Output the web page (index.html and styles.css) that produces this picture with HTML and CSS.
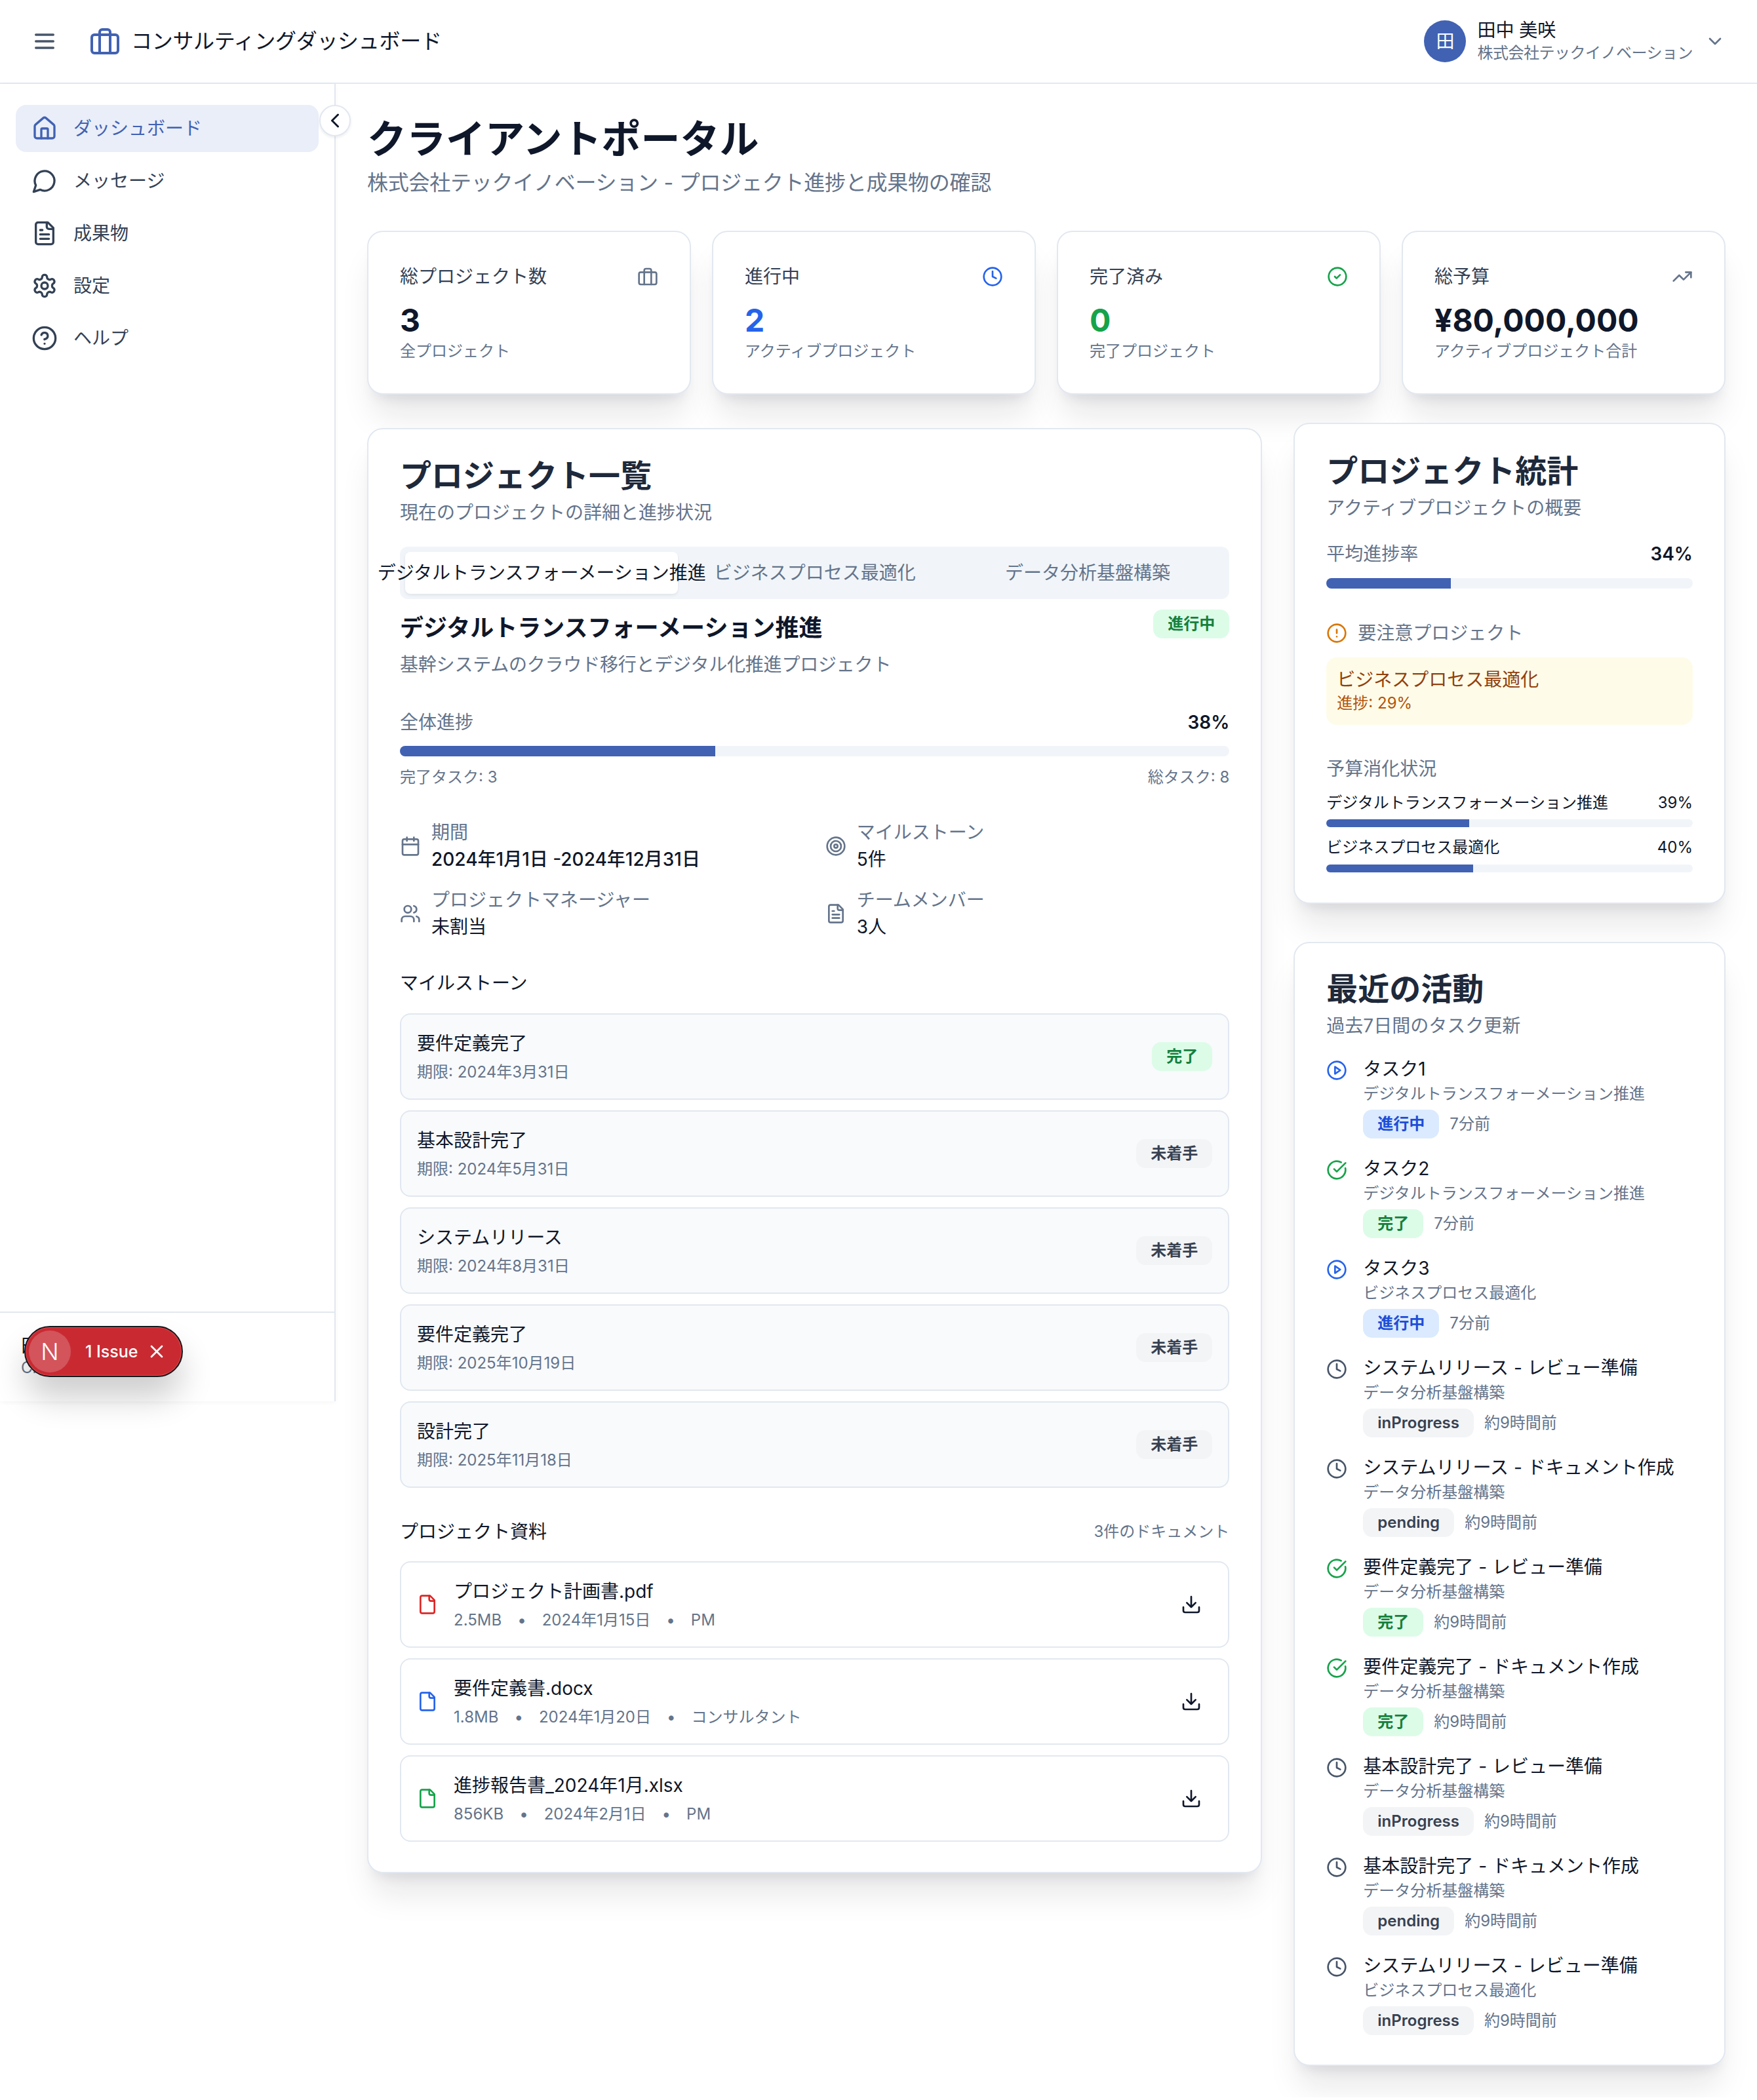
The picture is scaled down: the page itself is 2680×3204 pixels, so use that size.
FILE: index.html
```html
<!DOCTYPE html>
<html lang="ja">
<head>
    <meta charset="UTF-8">
    <title>コンサルティングダッシュボード</title>
    <link rel="stylesheet" href="styles.css">
</head>
<body>
    <!-- icon sprite -->
    <svg class="sprite" xmlns="http://www.w3.org/2000/svg">
        <symbol id="i-menu" viewBox="0 0 24 24"><path d="M4 12h16M4 6h16M4 18h16"/></symbol>
        <symbol id="i-briefcase" viewBox="0 0 24 24"><rect x="2" y="7" width="20" height="14" rx="2"/><path d="M16 21V5a2 2 0 0 0-2-2h-4a2 2 0 0 0-2 2v16"/></symbol>
        <symbol id="i-home" viewBox="0 0 24 24"><path d="M15 21v-8a1 1 0 0 0-1-1h-4a1 1 0 0 0-1 1v8"/><path d="M3 10a2 2 0 0 1 .709-1.528l7-5.999a2 2 0 0 1 2.582 0l7 5.999A2 2 0 0 1 21 10v9a2 2 0 0 1-2 2H5a2 2 0 0 1-2-2z"/></symbol>
        <symbol id="i-message" viewBox="0 0 24 24"><path d="M7.9 20A9 9 0 1 0 4 16.1L2 22Z"/></symbol>
        <symbol id="i-file-text" viewBox="0 0 24 24"><path d="M15 2H6a2 2 0 0 0-2 2v16a2 2 0 0 0 2 2h12a2 2 0 0 0 2-2V7Z"/><path d="M14 2v4a2 2 0 0 0 2 2h4"/><path d="M10 9H8M16 13H8M16 17H8"/></symbol>
        <symbol id="i-file" viewBox="0 0 24 24"><path d="M15 2H6a2 2 0 0 0-2 2v16a2 2 0 0 0 2 2h12a2 2 0 0 0 2-2V7Z"/><path d="M14 2v4a2 2 0 0 0 2 2h4"/></symbol>
        <symbol id="i-settings" viewBox="0 0 24 24"><path d="M12.22 2h-.44a2 2 0 0 0-2 2v.18a2 2 0 0 1-1 1.73l-.43.25a2 2 0 0 1-2 0l-.15-.08a2 2 0 0 0-2.73.73l-.22.38a2 2 0 0 0 .73 2.73l.15.1a2 2 0 0 1 1 1.72v.51a2 2 0 0 1-1 1.74l-.15.09a2 2 0 0 0-.73 2.73l.22.38a2 2 0 0 0 2.73.73l.15-.08a2 2 0 0 1 2 0l.43.25a2 2 0 0 1 1 1.73V20a2 2 0 0 0 2 2h.44a2 2 0 0 0 2-2v-.18a2 2 0 0 1 1-1.73l.43-.25a2 2 0 0 1 2 0l.15.08a2 2 0 0 0 2.73-.73l.22-.39a2 2 0 0 0-.73-2.73l-.15-.08a2 2 0 0 1-1-1.74v-.5a2 2 0 0 1 1-1.74l.15-.09a2 2 0 0 0 .73-2.73l-.22-.38a2 2 0 0 0-2.73-.73l-.15.08a2 2 0 0 1-2 0l-.43-.25a2 2 0 0 1-1-1.73V4a2 2 0 0 0-2-2z"/><circle cx="12" cy="12" r="3"/></symbol>
        <symbol id="i-help" viewBox="0 0 24 24"><circle cx="12" cy="12" r="10"/><path d="M9.09 9a3 3 0 0 1 5.83 1c0 2-3 3-3 3M12 17h.01"/></symbol>
        <symbol id="i-chevron-down" viewBox="0 0 24 24"><path d="m6 9 6 6 6-6"/></symbol>
        <symbol id="i-chevron-left" viewBox="0 0 24 24"><path d="m15 18-6-6 6-6"/></symbol>
        <symbol id="i-clock" viewBox="0 0 24 24"><circle cx="12" cy="12" r="10"/><path d="M12 6v6l4 2"/></symbol>
        <symbol id="i-check" viewBox="0 0 24 24"><circle cx="12" cy="12" r="10"/><path d="m9 12 2 2 4-4"/></symbol>
        <symbol id="i-check-big" viewBox="0 0 24 24"><path d="M21.801 10A10 10 0 1 1 17 3.335"/><path d="m9 11 3 3L22 4"/></symbol>
        <symbol id="i-play" viewBox="0 0 24 24"><circle cx="12" cy="12" r="10"/><path d="M10 8l6 4-6 4z"/></symbol>
        <symbol id="i-trend" viewBox="0 0 24 24"><path d="M22 7l-8.5 8.5-5-5L2 17"/><path d="M16 7h6v6"/></symbol>
        <symbol id="i-calendar" viewBox="0 0 24 24"><path d="M8 2v4M16 2v4"/><rect x="3" y="4" width="18" height="18" rx="2"/><path d="M3 10h18"/></symbol>
        <symbol id="i-target" viewBox="0 0 24 24"><circle cx="12" cy="12" r="10"/><circle cx="12" cy="12" r="6"/><circle cx="12" cy="12" r="2"/></symbol>
        <symbol id="i-users" viewBox="0 0 24 24"><path d="M16 21v-2a4 4 0 0 0-4-4H6a4 4 0 0 0-4 4v2"/><circle cx="9" cy="7" r="4"/><path d="M22 21v-2a4 4 0 0 0-3-3.87M16 3.13a4 4 0 0 1 0 7.75"/></symbol>
        <symbol id="i-download" viewBox="0 0 24 24"><path d="M21 15v4a2 2 0 0 1-2 2H5a2 2 0 0 1-2-2v-4"/><path d="m7 10 5 5 5-5M12 15V3"/></symbol>
        <symbol id="i-alert" viewBox="0 0 24 24"><circle cx="12" cy="12" r="10"/><path d="M12 8v4M12 16h.01"/></symbol>
        <symbol id="i-x" viewBox="0 0 24 24"><path d="M18 6 6 18M6 6l12 12"/></symbol>
    </svg>

    <header class="topbar">
        <div class="topbar-left">
            <svg class="icon icon-40 topbar-menu"><use href="#i-menu"/></svg>
            <svg class="icon topbar-logo"><use href="#i-briefcase"/></svg>
            <span class="topbar-title">コンサルティングダッシュボード</span>
        </div>
        <div class="user">
            <div class="user-avatar">田</div>
            <div class="user-text">
                <div class="user-name">田中 美咲</div>
                <div class="user-company">株式会社テックイノベーション</div>
            </div>
            <svg class="icon icon-32 user-chevron"><use href="#i-chevron-down"/></svg>
        </div>
    </header>

    <div class="layout">
        <aside class="sidebar">
            <button class="collapse-btn"><svg class="icon icon-36"><use href="#i-chevron-left"/></svg></button>
            <nav class="nav">
                <a class="nav-item active"><svg class="icon icon-40"><use href="#i-home"/></svg>ダッシュボード</a>
                <a class="nav-item"><svg class="icon icon-40"><use href="#i-message"/></svg>メッセージ</a>
                <a class="nav-item"><svg class="icon icon-40"><use href="#i-file-text"/></svg>成果物</a>
                <a class="nav-item"><svg class="icon icon-40"><use href="#i-settings"/></svg>設定</a>
                <a class="nav-item"><svg class="icon icon-40"><use href="#i-help"/></svg>ヘルプ</a>
            </nav>
            <div class="sidebar-foot">
                <div class="foot-name">田中 美咲</div>
                <div class="foot-role">Client</div>
            </div>
            <div class="issue-toast">
                <span class="issue-logo">N</span>
                <span class="issue-text">1 Issue</span>
                <svg class="icon issue-close"><use href="#i-x"/></svg>
            </div>
        </aside>

        <main class="main">
            <h1 class="page-title">クライアントポータル</h1>
            <p class="page-sub">株式会社テックイノベーション - プロジェクト進捗と成果物の確認</p>

            <section class="stats">
                <div class="card stat">
                    <div class="stat-head"><span>総プロジェクト数</span><svg class="icon icon-32 c-slate"><use href="#i-briefcase"/></svg></div>
                    <div class="stat-value">3</div>
                    <div class="stat-sub">全プロジェクト</div>
                </div>
                <div class="card stat">
                    <div class="stat-head"><span>進行中</span><svg class="icon icon-32 c-blue"><use href="#i-clock"/></svg></div>
                    <div class="stat-value c-blue">2</div>
                    <div class="stat-sub">アクティブプロジェクト</div>
                </div>
                <div class="card stat">
                    <div class="stat-head"><span>完了済み</span><svg class="icon icon-32 c-green"><use href="#i-check"/></svg></div>
                    <div class="stat-value c-green">0</div>
                    <div class="stat-sub">完了プロジェクト</div>
                </div>
                <div class="card stat">
                    <div class="stat-head"><span>総予算</span><svg class="icon icon-32 c-slate"><use href="#i-trend"/></svg></div>
                    <div class="stat-value">¥80,000,000</div>
                    <div class="stat-sub">アクティブプロジェクト合計</div>
                </div>
            </section>

            <div class="columns">
                <section class="card panel panel-projects">
                    <h2 class="panel-title">プロジェクト一覧</h2>
                    <p class="panel-sub">現在のプロジェクトの詳細と進捗状況</p>

                    <div class="tabs">
                        <div class="tab active">デジタルトランスフォーメーション推進</div>
                        <div class="tab">ビジネスプロセス最適化</div>
                        <div class="tab">データ分析基盤構築</div>
                    </div>

                    <div class="project-head">
                        <h3 class="project-name">デジタルトランスフォーメーション推進</h3>
                        <span class="badge badge-green">進行中</span>
                    </div>
                    <p class="project-desc">基幹システムのクラウド移行とデジタル化推進プロジェクト</p>

                    <div class="row-between progress-head">
                        <span class="muted">全体進捗</span>
                        <span class="strong">38%</span>
                    </div>
                    <div class="bar bar-16"><div class="bar-fill" style="width: 38%"></div></div>
                    <div class="row-between progress-foot">
                        <span>完了タスク: 3</span>
                        <span>総タスク: 8</span>
                    </div>

                    <div class="details">
                        <div class="detail">
                            <svg class="icon icon-32 c-slate"><use href="#i-calendar"/></svg>
                            <div><div class="muted">期間</div><div class="detail-value detail-dates">2024年1月1日 -2024年12月31日</div></div>
                        </div>
                        <div class="detail">
                            <svg class="icon icon-32 c-slate"><use href="#i-target"/></svg>
                            <div><div class="muted">マイルストーン</div><div class="detail-value">5件</div></div>
                        </div>
                        <div class="detail">
                            <svg class="icon icon-32 c-slate"><use href="#i-users"/></svg>
                            <div><div class="muted">プロジェクトマネージャー</div><div class="detail-value">未割当</div></div>
                        </div>
                        <div class="detail">
                            <svg class="icon icon-32 c-slate"><use href="#i-file-text"/></svg>
                            <div><div class="muted">チームメンバー</div><div class="detail-value">3人</div></div>
                        </div>
                    </div>

                    <h4 class="section-head milestones-head">マイルストーン</h4>
                    <div class="milestones">
                        <div class="milestone">
                            <div><div class="item-title">要件定義完了</div><div class="item-sub">期限: 2024年3月31日</div></div>
                            <span class="badge badge-green">完了</span>
                        </div>
                        <div class="milestone">
                            <div><div class="item-title">基本設計完了</div><div class="item-sub">期限: 2024年5月31日</div></div>
                            <span class="badge badge-gray">未着手</span>
                        </div>
                        <div class="milestone">
                            <div><div class="item-title">システムリリース</div><div class="item-sub">期限: 2024年8月31日</div></div>
                            <span class="badge badge-gray">未着手</span>
                        </div>
                        <div class="milestone">
                            <div><div class="item-title">要件定義完了</div><div class="item-sub">期限: 2025年10月19日</div></div>
                            <span class="badge badge-gray">未着手</span>
                        </div>
                        <div class="milestone">
                            <div><div class="item-title">設計完了</div><div class="item-sub">期限: 2025年11月18日</div></div>
                            <span class="badge badge-gray">未着手</span>
                        </div>
                    </div>

                    <div class="row-between docs-head">
                        <h4 class="section-head">プロジェクト資料</h4>
                        <span class="docs-count">3件のドキュメント</span>
                    </div>
                    <div class="docs">
                        <div class="doc">
                            <svg class="icon icon-32 c-red"><use href="#i-file"/></svg>
                            <div class="doc-body">
                                <div class="item-title">プロジェクト計画書.pdf</div>
                                <div class="item-sub doc-meta"><span>2.5MB</span><span>•</span><span>2024年1月15日</span><span>•</span><span>PM</span></div>
                            </div>
                            <svg class="icon icon-32 doc-download"><use href="#i-download"/></svg>
                        </div>
                        <div class="doc">
                            <svg class="icon icon-32 c-blue"><use href="#i-file"/></svg>
                            <div class="doc-body">
                                <div class="item-title">要件定義書.docx</div>
                                <div class="item-sub doc-meta"><span>1.8MB</span><span>•</span><span>2024年1月20日</span><span>•</span><span>コンサルタント</span></div>
                            </div>
                            <svg class="icon icon-32 doc-download"><use href="#i-download"/></svg>
                        </div>
                        <div class="doc">
                            <svg class="icon icon-32 c-green"><use href="#i-file"/></svg>
                            <div class="doc-body">
                                <div class="item-title">進捗報告書_2024年1月.xlsx</div>
                                <div class="item-sub doc-meta"><span>856KB</span><span>•</span><span>2024年2月1日</span><span>•</span><span>PM</span></div>
                            </div>
                            <svg class="icon icon-32 doc-download"><use href="#i-download"/></svg>
                        </div>
                    </div>
                </section>

                <div class="side-col">
                    <section class="card panel panel-stats">
                        <h2 class="panel-title">プロジェクト統計</h2>
                        <p class="panel-sub">アクティブプロジェクトの概要</p>

                        <div class="row-between avg-head">
                            <span class="muted">平均進捗率</span>
                            <span class="strong">34%</span>
                        </div>
                        <div class="bar bar-16 avg-bar"><div class="bar-fill" style="width: 34%"></div></div>

                        <div class="warn-head"><svg class="icon icon-32 c-orange"><use href="#i-alert"/></svg><span class="muted">要注意プロジェクト</span></div>
                        <div class="warn-box">
                            <div class="warn-title">ビジネスプロセス最適化</div>
                            <div class="warn-sub">進捗: 29%</div>
                        </div>

                        <div class="muted budget-head">予算消化状況</div>
                        <div class="row-between budget-row"><span>デジタルトランスフォーメーション推進</span><span>39%</span></div>
                        <div class="bar bar-12"><div class="bar-fill" style="width: 39%"></div></div>
                        <div class="row-between budget-row"><span>ビジネスプロセス最適化</span><span>40%</span></div>
                        <div class="bar bar-12 budget-last"><div class="bar-fill" style="width: 40%"></div></div>
                    </section>

                    <section class="card panel panel-activity">
                        <h2 class="panel-title">最近の活動</h2>
                        <p class="panel-sub">過去7日間のタスク更新</p>

                        <ul class="activity">
                            <li class="activity-item">
                                <svg class="icon icon-32 c-blue"><use href="#i-play"/></svg>
                                <div><div class="item-title">タスク1</div><div class="item-sub">デジタルトランスフォーメーション推進</div>
                                <div class="activity-meta"><span class="badge badge-blue">進行中</span><span>7分前</span></div></div>
                            </li>
                            <li class="activity-item">
                                <svg class="icon icon-32 c-green"><use href="#i-check-big"/></svg>
                                <div><div class="item-title">タスク2</div><div class="item-sub">デジタルトランスフォーメーション推進</div>
                                <div class="activity-meta"><span class="badge badge-green">完了</span><span>7分前</span></div></div>
                            </li>
                            <li class="activity-item">
                                <svg class="icon icon-32 c-blue"><use href="#i-play"/></svg>
                                <div><div class="item-title">タスク3</div><div class="item-sub">ビジネスプロセス最適化</div>
                                <div class="activity-meta"><span class="badge badge-blue">進行中</span><span>7分前</span></div></div>
                            </li>
                            <li class="activity-item">
                                <svg class="icon icon-32 c-gray"><use href="#i-clock"/></svg>
                                <div><div class="item-title">システムリリース - レビュー準備</div><div class="item-sub">データ分析基盤構築</div>
                                <div class="activity-meta"><span class="badge badge-gray">inProgress</span><span>約9時間前</span></div></div>
                            </li>
                            <li class="activity-item">
                                <svg class="icon icon-32 c-gray"><use href="#i-clock"/></svg>
                                <div><div class="item-title">システムリリース - ドキュメント作成</div><div class="item-sub">データ分析基盤構築</div>
                                <div class="activity-meta"><span class="badge badge-gray">pending</span><span>約9時間前</span></div></div>
                            </li>
                            <li class="activity-item">
                                <svg class="icon icon-32 c-green"><use href="#i-check-big"/></svg>
                                <div><div class="item-title">要件定義完了 - レビュー準備</div><div class="item-sub">データ分析基盤構築</div>
                                <div class="activity-meta"><span class="badge badge-green">完了</span><span>約9時間前</span></div></div>
                            </li>
                            <li class="activity-item">
                                <svg class="icon icon-32 c-green"><use href="#i-check-big"/></svg>
                                <div><div class="item-title">要件定義完了 - ドキュメント作成</div><div class="item-sub">データ分析基盤構築</div>
                                <div class="activity-meta"><span class="badge badge-green">完了</span><span>約9時間前</span></div></div>
                            </li>
                            <li class="activity-item">
                                <svg class="icon icon-32 c-gray"><use href="#i-clock"/></svg>
                                <div><div class="item-title">基本設計完了 - レビュー準備</div><div class="item-sub">データ分析基盤構築</div>
                                <div class="activity-meta"><span class="badge badge-gray">inProgress</span><span>約9時間前</span></div></div>
                            </li>
                            <li class="activity-item">
                                <svg class="icon icon-32 c-gray"><use href="#i-clock"/></svg>
                                <div><div class="item-title">基本設計完了 - ドキュメント作成</div><div class="item-sub">データ分析基盤構築</div>
                                <div class="activity-meta"><span class="badge badge-gray">pending</span><span>約9時間前</span></div></div>
                            </li>
                            <li class="activity-item">
                                <svg class="icon icon-32 c-gray"><use href="#i-clock"/></svg>
                                <div><div class="item-title">システムリリース - レビュー準備</div><div class="item-sub">ビジネスプロセス最適化</div>
                                <div class="activity-meta"><span class="badge badge-gray">inProgress</span><span>約9時間前</span></div></div>
                            </li>
                        </ul>
                    </section>
                </div>
            </div>
        </main>
    </div>
</body>
</html>
```

FILE: styles.css
```css
* {
    box-sizing: border-box;
}

body {
    margin: 0;
    background-color: #ffffff;
    color: #0f172a;
    font-family: Inter, "Noto Sans CJK JP", sans-serif;
    font-size: 28px;
    line-height: 40px;
}

h1, h2, h3, h4, p, ul {
    margin: 0;
    padding: 0;
}

.sprite {
    display: none;
}

/* icons */
.icon {
    flex: none;
    fill: none;
    stroke: currentColor;
    stroke-width: 2;
    stroke-linecap: round;
    stroke-linejoin: round;
}

.icon-40 { width: 40px; height: 40px; }
.icon-36 { width: 36px; height: 36px; }
.icon-32 { width: 32px; height: 32px; }

.c-slate { color: #64748b; }
.c-blue { color: #2563eb; }
.c-green { color: #16a34a; }
.c-red { color: #dc2626; }
.c-gray { color: #475569; }
.c-orange { color: #d97706; }

/* top bar */
.topbar {
    height: 128px;
    padding: 0 48px;
    display: flex;
    align-items: center;
    justify-content: space-between;
    background-color: #ffffff;
    border-bottom: 2px solid #e2e8f0;
}

.topbar-left {
    display: flex;
    align-items: center;
}

.topbar-menu {
    color: #475569;
    margin-right: 48px;
}

.topbar-logo {
    width: 48px;
    height: 48px;
    color: #4162b3;
    margin-right: 16px;
}

.topbar-title {
    font-size: 32px;
    letter-spacing: -0.3px;
}

.user {
    display: flex;
    align-items: center;
}

.user-avatar {
    width: 64px;
    height: 64px;
    border-radius: 50%;
    background-color: #4162b3;
    color: #ffffff;
    font-size: 28px;
    display: flex;
    align-items: center;
    justify-content: center;
    margin-right: 17px;
}

.user-name {
    line-height: 34px;
}

.user-company {
    margin-top: 2px;
    font-size: 24px;
    line-height: 32px;
    letter-spacing: -0.5px;
    color: #64748b;
}

.user-chevron {
    color: #64748b;
    margin-left: 18px;
}

/* page layout */
.layout {
    display: flex;
    align-items: flex-start;
}

.sidebar {
    position: relative;
    flex: none;
    width: 512px;
    height: 2010px;
    display: flex;
    flex-direction: column;
    border-right: 2px solid #e2e8f0;
    box-shadow: 0 2px 6px rgba(15, 23, 42, 0.04);
}

.nav {
    flex: 1;
    padding: 32px 24px;
    display: flex;
    flex-direction: column;
    gap: 8px;
}

.nav-item {
    height: 72px;
    width: 462px;
    padding: 0 24px;
    display: flex;
    align-items: center;
    gap: 24px;
    border-radius: 16px;
    color: #334155;
}

.nav-item.active {
    background-color: #e9eef8;
    color: #4162b3;
}

.collapse-btn {
    position: absolute;
    top: 32px;
    right: -25px;
    width: 48px;
    height: 48px;
    padding: 0;
    display: flex;
    align-items: center;
    justify-content: center;
    background-color: #ffffff;
    border: 2px solid #e2e8f0;
    border-radius: 50%;
    color: #0f172a;
    box-shadow: 0 2px 4px rgba(15, 23, 42, 0.08);
}

.sidebar-foot {
    height: 137px;
    padding: 32px;
    border-top: 2px solid #e2e8f0;
}

.foot-name {
    line-height: 36px;
}

.foot-role {
    font-size: 24px;
    line-height: 32px;
    color: #64748b;
}

.issue-toast {
    position: absolute;
    left: 38px;
    top: 1896px;
    width: 240px;
    height: 76px;
    padding-left: 4px;
    display: flex;
    align-items: center;
    color: #ffffff;
    background-color: #c92a32;
    border: 2px solid #e5484d;
    border-radius: 38px;
    outline: 2px solid #16161a;
    outline-offset: -1px;
    box-shadow: 0 32px 50px rgba(0, 0, 0, 0.2);
}

.issue-logo {
    width: 64px;
    height: 64px;
    border-radius: 50%;
    background-color: rgba(255, 255, 255, 0.2);
    display: flex;
    align-items: center;
    justify-content: center;
    font-size: 36px;
    font-weight: 300;
    margin-right: 22px;
}

.issue-text {
    font-size: 25px;
    font-weight: 500;
    white-space: nowrap;
}

.issue-close {
    width: 32px;
    height: 32px;
    margin-left: 12px;
}

.main {
    flex: 1;
    min-width: 0;
    padding: 48px;
}

.page-title {
    font-size: 60px;
    line-height: 72px;
    font-weight: 700;
}

.page-sub {
    margin-top: 8px;
    font-size: 32px;
    line-height: 46px;
    letter-spacing: -0.25px;
    color: #64748b;
}

/* cards */
.card {
    background-color: #ffffff;
    border: 2px solid #e2e8f0;
    border-radius: 24px;
    box-shadow: 0 40px 50px -10px rgba(15, 23, 42, 0.1), 0 16px 20px -12px rgba(15, 23, 42, 0.1);
}

.stats {
    margin-top: 50px;
    display: grid;
    grid-template-columns: repeat(4, 1fr);
    gap: 32px;
}

.stat {
    height: 250px;
    padding: 48px;
}

.stat-head {
    display: flex;
    align-items: center;
    justify-content: space-between;
    color: #334155;
}

.stat-value {
    margin-top: 16px;
    font-size: 48px;
    line-height: 62px;
    font-weight: 700;
}

.stat-sub {
    font-size: 24px;
    line-height: 32px;
    color: #64748b;
}

.columns {
    margin-top: 43px;
    display: grid;
    grid-template-columns: repeat(3, 1fr);
    column-gap: 48px;
    align-items: start;
}

.side-col {
    display: flex;
    flex-direction: column;
    gap: 58px;
}

.panel {
    padding: 48px;
}

.panel-projects {
    grid-column: span 2;
    margin-top: 8px;
    padding-top: 47px;
    padding-bottom: 46px;
}

.panel-stats {
    padding-bottom: 46px;
}

.panel-activity {
    padding-top: 46px;
    padding-bottom: 45px;
}

.panel-title {
    font-size: 48px;
    line-height: 48px;
    font-weight: 700;
    color: #1e293b;
}

.panel-sub {
    margin-top: 12px;
    color: #64748b;
}

.muted {
    color: #64748b;
}

.strong {
    font-weight: 600;
}

.row-between {
    display: flex;
    align-items: center;
    justify-content: space-between;
}

/* tabs */
.tabs {
    margin-top: 32px;
    height: 80px;
    padding: 8px;
    display: grid;
    grid-template-columns: repeat(3, 1fr);
    background-color: #f1f5f9;
    border-radius: 12px;
}

.tab {
    display: flex;
    align-items: center;
    justify-content: center;
    white-space: nowrap;
    color: #64748b;
    min-width: 0;
    border-radius: 8px;
}

.tab.active {
    background-color: #ffffff;
    color: #0f172a;
    box-shadow: 0 2px 4px rgba(15, 23, 42, 0.08);
}

/* selected project */
.project-head {
    margin-top: 16px;
    display: flex;
    align-items: flex-start;
    justify-content: space-between;
}

.project-name {
    font-size: 36px;
    line-height: 56px;
    font-weight: 700;
}

.project-desc {
    margin-top: 8px;
    letter-spacing: -0.2px;
    color: #64748b;
}

.progress-head {
    margin-top: 48px;
}

.bar {
    margin-top: 16px;
    background-color: #f1f5f9;
    border-radius: 8px;
    overflow: hidden;
}

.bar-16 { height: 16px; }
.bar-12 { height: 12px; margin-top: 9px; }

.bar-fill {
    height: 100%;
    background-color: #4162b3;
}

.progress-foot {
    margin-top: 16px;
    font-size: 24px;
    line-height: 32px;
    color: #64748b;
}

.details {
    margin-top: 48px;
    display: grid;
    grid-template-columns: 1fr 1fr;
    column-gap: 32px;
    row-gap: 22px;
}

.detail {
    display: flex;
    align-items: center;
    gap: 16px;
}

.detail-value {
    margin-top: 1px;
}

.detail-dates {
    font-weight: 500;
}

.section-head {
    font-size: 28px;
    line-height: 40px;
    font-weight: 400;
}

.milestones-head {
    margin-top: 46px;
}

.milestones, .docs {
    display: flex;
    flex-direction: column;
    gap: 16px;
}

.milestones {
    margin-top: 26px;
}

.milestone {
    height: 132px;
    padding: 0 24px;
    display: flex;
    align-items: center;
    justify-content: space-between;
    background-color: #f8fafc;
    border: 2px solid #e2e8f0;
    border-radius: 16px;
}

.item-sub {
    font-size: 24px;
    line-height: 32px;
    color: #64748b;
}

.milestone .item-sub, .doc .item-sub {
    margin-top: 8px;
}

.badge {
    height: 44px;
    padding: 0 22px;
    display: inline-flex;
    align-items: center;
    font-size: 24px;
    font-weight: 600;
    line-height: 32px;
    border-radius: 14px;
    white-space: nowrap;
}

.badge-green { background-color: #dcfce7; color: #15803d; }
.badge-blue { background-color: #dbeafe; color: #1d4ed8; }
.badge-gray { background-color: #f3f4f6; color: #374151; }

/* documents */
.docs-head {
    margin-top: 47px;
}

.docs-count {
    font-size: 24px;
    color: #64748b;
}

.docs {
    margin-top: 25px;
}

.doc {
    height: 132px;
    padding: 0 40px 0 24px;
    display: flex;
    align-items: center;
    gap: 24px;
    border: 2px solid #e2e8f0;
    border-radius: 16px;
}

.doc-body {
    flex: 1;
}

.doc-meta {
    display: flex;
    gap: 24px;
}

.doc-download {
    color: #0f172a;
}

/* stats panel */
.avg-head {
    margin-top: 30px;
}

.avg-bar {
    margin-top: 17px;
}

.warn-head {
    margin-top: 48px;
    display: flex;
    align-items: center;
    gap: 16px;
}

.warn-box {
    margin-top: 17px;
    height: 103px;
    padding: 14px 16px;
    background-color: #fefce8;
    border-radius: 16px;
}

.warn-title {
    color: #92400e;
    line-height: 40px;
}

.warn-sub {
    font-size: 24px;
    line-height: 32px;
    color: #b45309;
}

.budget-head {
    margin-top: 47px;
}

.budget-row {
    font-size: 24px;
    line-height: 32px;
    margin-top: 15px;
}

.budget-head + .budget-row {
    margin-top: 16px;
}

.budget-last {
    margin-top: 10px;
}

/* activity list */
.activity {
    margin-top: 26px;
    list-style: none;
    display: flex;
    flex-direction: column;
    gap: 26px;
}

.activity-item {
    display: flex;
    gap: 24px;
}

.activity-item > .icon {
    margin-top: 6px;
}

.activity .item-sub {
    margin-top: 2px;
}

.activity-meta {
    margin-top: 8px;
    display: flex;
    align-items: center;
    gap: 16px;
    font-size: 24px;
    color: #64748b;
}
```
